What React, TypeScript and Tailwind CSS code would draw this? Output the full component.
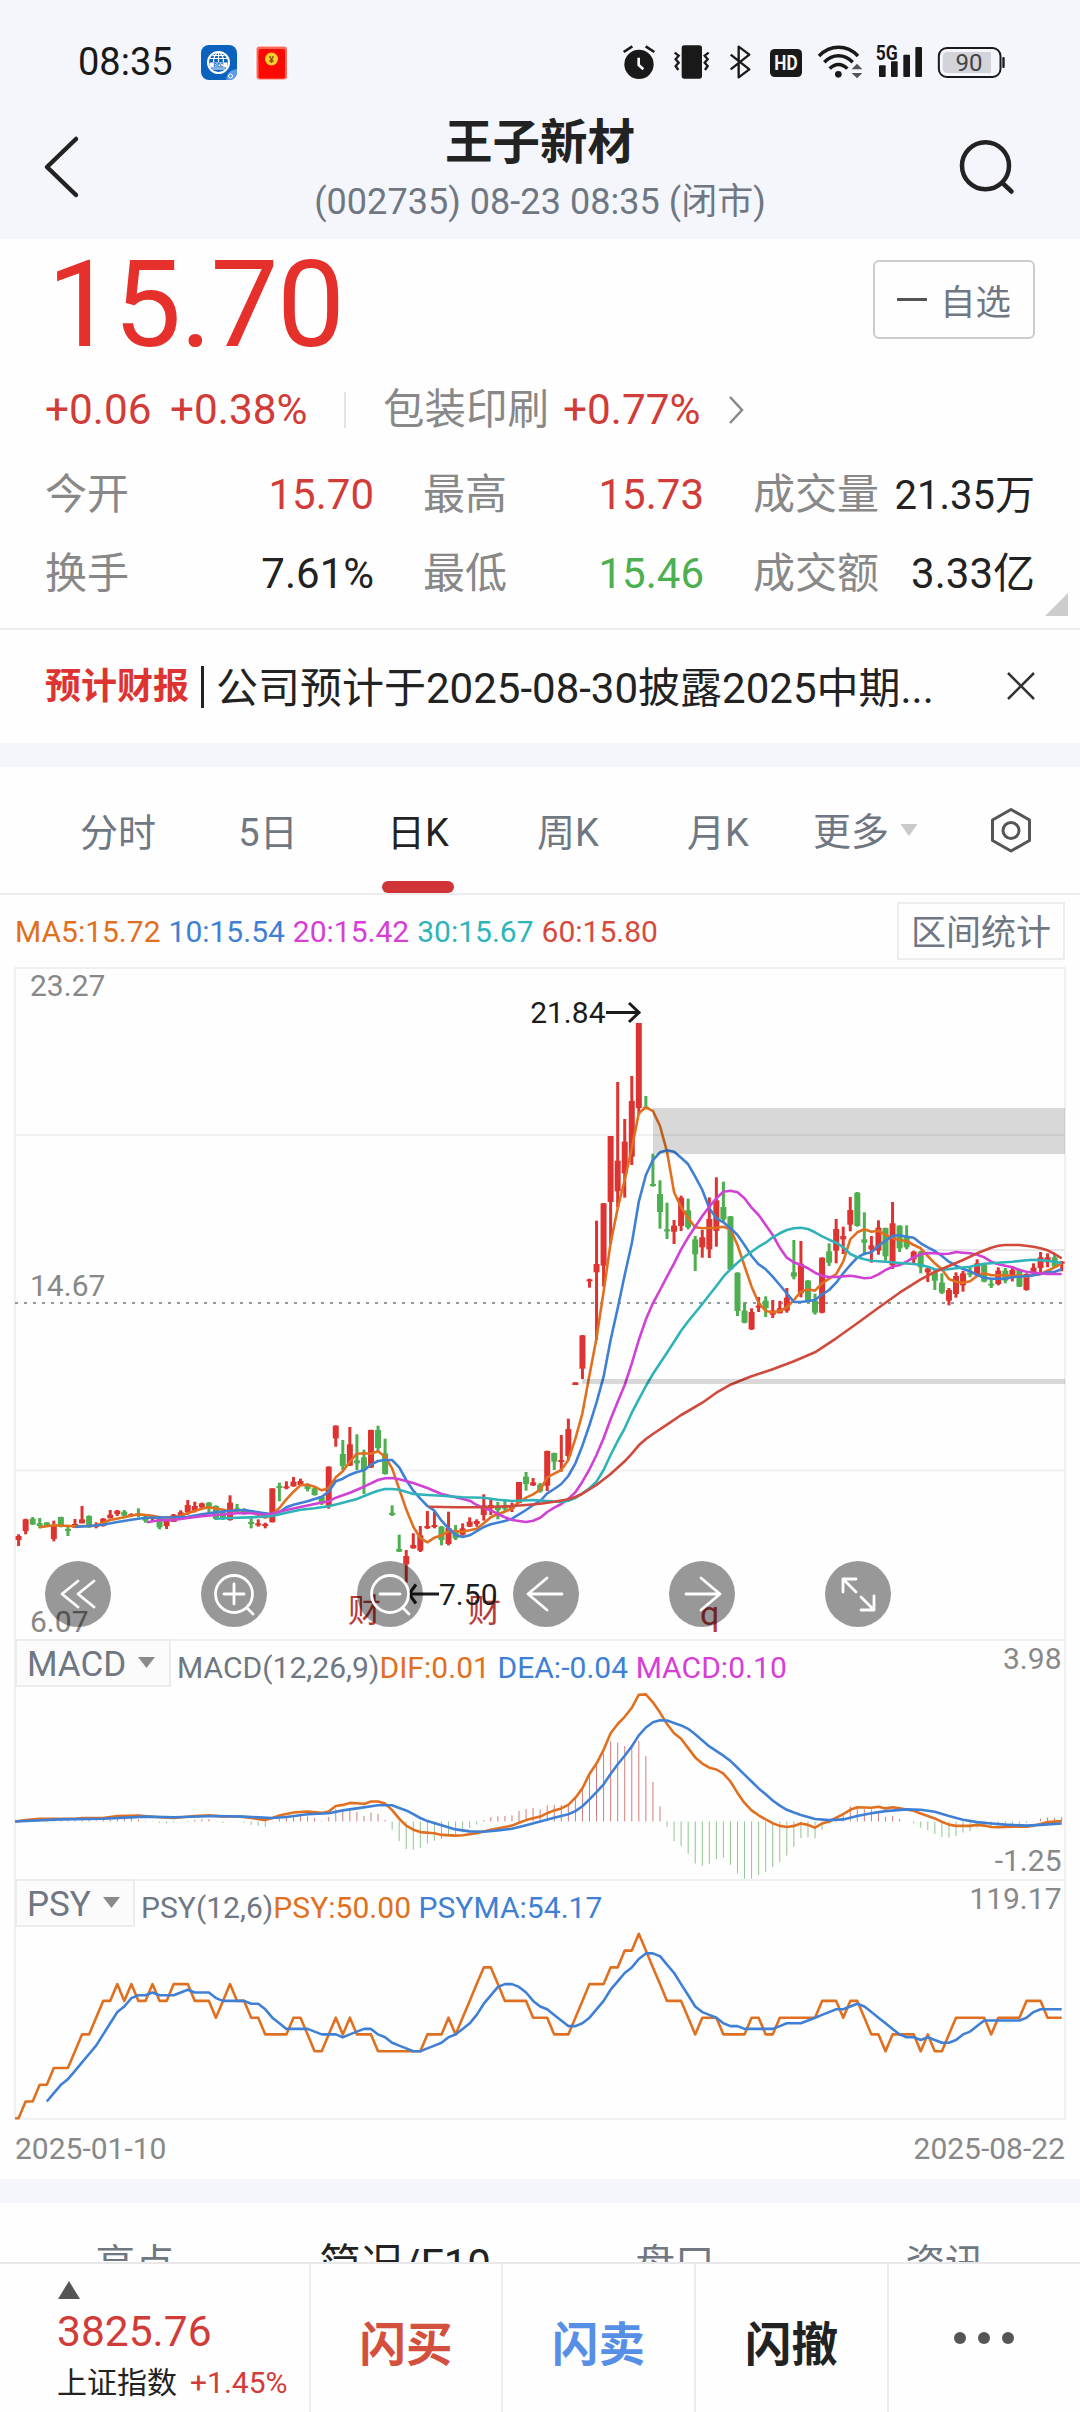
import * as React from "react";

import clsx from "clsx";

type Point = [number, number];
// high, body top, body bottom, low, 1 = up / 0 = down
type Candle = [number, number, number, number, 0 | 1];

const STEP = 7.048;
const X0 = 18.6;
const LEFT = 15;
const RIGHT = 1065;

const x = (i: number) => Math.min(RIGHT, Math.max(LEFT, X0 + i * STEP));

// series are stored in scaled units, these bring them to the pixels of each panel
const priceY = (v: number) => v / 3 + 13;
const macdY = (v: number) => v / 2.904 - 9;
const psyY = (level: number) => (1418 - level * 48.7) / 2.904 - 249;

const EARLY: Candle[] = [
  [763, 768, 780, 798, 1], [716, 718, 753, 763, 1], [711, 716, 733, 735, 0], [714, 730, 738, 745, 0], [727, 727, 738, 738, 0],
  [722, 735, 777, 784, 1], [710, 711, 740, 742, 0], [738, 747, 752, 768, 0], [717, 732, 743, 743, 1], [678, 718, 730, 730, 1],
  [706, 708, 742, 743, 0], [727, 735, 740, 745, 1], [714, 716, 737, 740, 1], [690, 704, 715, 715, 1], [690, 692, 702, 708, 1],
  [690, 695, 707, 710, 0], [700, 702, 707, 710, 1], [685, 700, 708, 712, 0], [706, 710, 722, 728, 0], [706, 708, 716, 726, 1],
  [708, 710, 742, 748, 0], [720, 723, 738, 747, 1], [702, 704, 726, 726, 1], [691, 697, 705, 720, 1], [660, 675, 697, 704, 1],
  [665, 678, 692, 697, 1], [668, 670, 682, 684, 1], [666, 668, 683, 697, 0], [676, 678, 717, 720, 0], [690, 697, 717, 720, 0],
  [646, 668, 720, 722, 1], [672, 685, 690, 697, 0], [685, 687, 698, 704, 0], [712, 726, 731, 745, 0], [718, 730, 735, 740, 1],
  [728, 732, 736, 745, 1], [625, 625, 727, 727, 1], [608, 618, 624, 664, 0], [604, 619, 624, 628, 1], [591, 605, 619, 620, 1],
  [596, 603, 615, 616, 1], [610, 612, 627, 634, 0], [624, 625, 645, 647, 0], [648, 650, 670, 675, 0], [559, 560, 677, 686, 1],
  [436, 437, 475, 500, 1], [480, 522, 558, 570, 0], [441, 493, 557, 558, 1], [463, 541, 550, 570, 0], [509, 532, 570, 642, 0],
  [449, 450, 562, 564, 1], [437, 450, 504, 516, 0], [476, 520, 582, 584, 0], [676, 698, 705, 708, 0], [764, 807, 815, 816, 0],
  [810, 828, 853, 908, 1], [760, 795, 805, 806, 1], [738, 766, 812, 816, 1], [693, 738, 745, 747, 1], [695, 735, 740, 745, 1],
  [738, 740, 780, 796, 0], [695, 744, 792, 796, 1], [735, 750, 775, 780, 0], [730, 745, 764, 767, 1], [712, 725, 740, 741, 1],
  [718, 723, 732, 740, 1], [643, 676, 705, 722, 1], [654, 675, 685, 705, 1], [666, 682, 690, 718, 0], [658, 678, 686, 694, 0],
  [668, 677, 686, 696, 1], [606, 606, 669, 670, 1], [576, 590, 612, 632, 0], [594, 607, 616, 618, 1], [609, 614, 634, 638, 0],
  [512, 513, 617, 633, 1], [518, 519, 545, 570, 0], [465, 540, 545, 575, 1], [416, 447, 528, 540, 1],
];

const LATE: Candle[] = [
  [1207, 1207, 1215, 1215, 1], [1065, 1066, 1166, 1197, 1], [896, 898, 904, 923, 1], [722, 852, 877, 1080, 1], [669, 670, 857, 920, 1],
  [468, 468, 666, 792, 1], [306, 542, 634, 682, 1], [417, 485, 580, 653, 1], [288, 363, 530, 555, 1], [129, 129, 384, 404, 1],
  [348, 380, 385, 388, 0], [521, 612, 618, 620, 0], [601, 642, 696, 746, 0], [668, 748, 754, 777, 0], [720, 737, 755, 792, 1],
  [647, 653, 738, 753, 1], [656, 691, 742, 748, 0], [768, 778, 823, 873, 0], [750, 772, 802, 833, 1], [652, 717, 808, 834, 1],
  [592, 661, 753, 800, 1], [605, 681, 718, 725, 0], [708, 709, 868, 870, 0], [877, 878, 993, 1008, 0], [967, 992, 1028, 1030, 0],
  [985, 996, 1048, 1050, 1], [951, 977, 982, 996, 1], [949, 962, 984, 1011, 0], [960, 992, 1004, 1014, 1], [963, 985, 1000, 1000, 1],
  [924, 953, 992, 998, 1], [780, 877, 890, 898, 0], [783, 851, 940, 952, 1], [900, 902, 960, 968, 0], [941, 962, 998, 1004, 0],
  [832, 833, 998, 1000, 1], [790, 814, 848, 858, 0], [717, 747, 812, 850, 1], [740, 768, 778, 822, 1], [651, 690, 734, 754, 1],
  [636, 638, 738, 740, 0], [697, 778, 788, 826, 0], [768, 796, 808, 848, 1], [721, 743, 812, 824, 1], [743, 744, 829, 842, 0],
  [666, 730, 856, 867, 1], [736, 737, 805, 816, 0], [736, 768, 802, 808, 0], [812, 815, 838, 854, 1], [812, 815, 862, 880, 0],
  [863, 866, 877, 906, 1], [868, 876, 902, 930, 0], [880, 908, 938, 942, 0], [924, 930, 962, 976, 1], [877, 888, 942, 953, 1],
  [873, 880, 916, 935, 1], [862, 878, 882, 892, 0], [838, 850, 886, 890, 1], [852, 854, 905, 907, 0], [898, 911, 917, 924, 0],
  [862, 872, 912, 916, 1], [864, 872, 902, 910, 0], [858, 870, 894, 904, 1], [866, 868, 920, 921, 0], [880, 882, 930, 932, 1],
  [850, 863, 880, 884, 1], [816, 832, 864, 883, 1], [820, 832, 847, 862, 1], [820, 832, 860, 864, 0], [843, 845, 850, 874, 1],
];

const CANDLES: Candle[] = [
  ...EARLY.map(([h, t, b, l, up]): Candle => [h + 900, t + 900, b + 900, l + 900, up]),
  ...LATE,
];

const MA5: Point[] = [
  [3, 1642], [5, 1636], [8, 1639], [10, 1638], [11, 1637], [12, 1628], [13, 1620], [15, 1612], [17, 1603], [19, 1607], [20, 1612], [22, 1613], [24, 1600],
  [26, 1586], [27, 1582], [29, 1589], [30, 1594], [32, 1590], [34, 1604], [35, 1613], [36, 1603], [37, 1584], [38, 1558], [39, 1535], [40, 1516],
  [41, 1514], [42, 1520], [43, 1531], [44, 1525], [45, 1492], [46, 1474], [47, 1445], [48, 1421], [49, 1420], [50, 1421], [51, 1414], [52, 1430],
  [53, 1465], [54, 1527], [55, 1588], [56, 1640], [57, 1674], [58, 1687], [59, 1673], [60, 1666], [61, 1654], [62, 1653], [63, 1655], [64, 1651],
  [65, 1646], [66, 1630], [67, 1612], [68, 1602], [69, 1595], [70, 1585], [71, 1566], [72, 1553], [73, 1543], [74, 1529], [75, 1492], [76, 1481],
  [77, 1470], [78, 1440], [79, 1376], [80, 1300], [81, 1185], [82, 1075], [83, 935], [84, 790], [85, 685], [86, 600], [87, 505], [88, 400],
  [89, 382], [90, 393], [91, 438], [92, 515], [93, 637], [94, 682], [95, 715], [96, 742], [97, 745], [99, 743], [100, 740], [101, 748],
  [102, 795], [103, 858], [104, 920], [105, 968], [106, 993], [107, 997], [108, 993], [109, 982], [110, 960], [111, 935], [112, 928], [113, 932],
  [114, 910], [115, 896], [116, 882], [117, 845], [118, 778], [119, 757], [120, 748], [121, 755], [122, 752], [123, 765], [124, 775], [125, 780],
  [126, 783], [127, 795], [128, 805], [129, 828], [130, 850], [131, 868], [132, 897], [133, 905], [134, 908], [135, 904], [136, 888], [137, 880],
  [138, 886], [140, 886], [141, 888], [142, 886], [143, 890], [144, 885], [145, 882], [146, 872], [147, 862], [148, 850],
];

const MA10: Point[] = [
  [8, 1641], [10, 1638], [12, 1634], [14, 1626], [16, 1619], [18, 1613], [22, 1612], [24, 1610], [26, 1603], [28, 1597], [30, 1592], [32, 1590],
  [34, 1597], [36, 1603], [37, 1596], [38, 1582], [39, 1574], [41, 1564], [43, 1550], [44, 1535], [45, 1504], [46, 1496], [47, 1484], [48, 1476],
  [49, 1471], [50, 1454], [51, 1443], [52, 1440], [53, 1440], [54, 1462], [55, 1500], [56, 1532], [57, 1556], [58, 1578], [59, 1592], [60, 1622],
  [61, 1645], [62, 1665], [63, 1671], [64, 1666], [66, 1641], [67, 1633], [69, 1623], [70, 1616], [71, 1603], [72, 1590], [73, 1575], [74, 1563],
  [75, 1540], [76, 1527], [77, 1512], [78, 1488], [79, 1450], [80, 1397], [81, 1335], [82, 1268], [83, 1190], [84, 1080], [85, 985], [86, 885],
  [87, 790], [88, 665], [89, 585], [90, 540], [91, 517], [92, 511], [93, 515], [94, 533], [95, 553], [96, 590], [97, 630], [98, 685], [99, 715],
  [100, 727], [101, 745], [102, 765], [103, 795], [104, 828], [105, 853], [106, 868], [107, 890], [108, 915], [109, 940], [110, 966], [111, 966],
  [112, 963], [113, 960], [114, 943], [115, 930], [116, 908], [117, 880], [118, 855], [119, 833], [120, 821], [121, 817], [122, 797], [123, 782],
  [124, 768], [125, 766], [126, 770], [127, 773], [128, 790], [129, 802], [130, 813], [131, 828], [132, 845], [133, 857], [134, 867], [135, 874],
  [136, 884], [137, 893], [138, 896], [140, 896], [141, 892], [142, 890], [144, 886], [145, 882], [146, 877], [147, 875], [148, 868],
];

const MA20: Point[] = [
  [18.2, 1627], [20, 1621], [22, 1620], [24, 1614], [26, 1609], [28, 1605], [31, 1600], [33, 1600], [35, 1604], [36, 1601], [38, 1590], [40, 1581],
  [42, 1572], [44, 1564], [45, 1553], [47, 1538], [49, 1520], [51, 1500], [52, 1495], [53, 1494], [54, 1498], [56, 1509], [58, 1524], [60, 1542],
  [62, 1552], [64, 1562], [65, 1575], [66, 1585], [67, 1591], [68, 1602], [69, 1612], [70, 1620], [71, 1623], [72, 1626], [73, 1622], [74, 1613],
  [75, 1596], [76, 1583], [77, 1572], [78, 1557], [79, 1537], [80, 1505], [81, 1468], [82, 1425], [83, 1375], [84, 1318], [85, 1265], [86, 1215],
  [87, 1150], [88, 1080], [89, 1018], [90, 970], [91, 930], [92, 890], [93, 850], [94, 808], [95, 772], [96, 740], [97, 708], [98, 680], [99, 655],
  [100, 635], [101, 632], [102, 637], [103, 655], [104, 683], [105, 705], [106, 735], [107, 765], [108, 803], [109, 833], [110, 847], [111, 855],
  [112, 865], [113, 878], [114, 887], [115, 891], [116, 891], [118, 887], [119, 890], [120, 895], [121, 893], [122, 883], [123, 870], [124, 860],
  [125, 855], [126, 845], [127, 832], [128, 823], [129, 819], [130, 820], [131, 822], [132, 821], [133, 816], [134, 818], [135, 820], [136, 824],
  [137, 832], [138, 845], [139, 853], [140, 857], [141, 862], [142, 870], [143, 875], [144, 878], [145, 880], [146, 882], [148, 882],
];

const MA30: Point[] = [
  [28, 1616], [30, 1614], [34, 1611], [36, 1608], [38, 1598], [40, 1589], [42, 1585], [44, 1579], [46, 1568], [48, 1557], [50, 1540], [51, 1532],
  [52, 1527], [53, 1527], [54, 1529], [56, 1542], [58, 1545], [60, 1547], [63, 1552], [66, 1553], [68, 1559], [70, 1563], [73, 1560], [75, 1563],
  [77, 1566], [78, 1562], [79, 1554], [80, 1540], [81, 1525], [82, 1505], [83, 1470], [84, 1425], [85, 1383], [86, 1345], [87, 1298], [88, 1258],
  [89, 1218], [90, 1182], [91, 1150], [92, 1118], [93, 1085], [94, 1052], [95, 1024], [96, 998], [97, 972], [98, 945], [99, 918], [100, 890],
  [101, 868], [102, 848], [103, 830], [104, 815], [105, 800], [106, 788], [107, 772], [108, 760], [109, 750], [110, 745], [111, 743], [112, 747],
  [113, 757], [114, 769], [115, 779], [116, 788], [117, 802], [118, 822], [119, 832], [120, 838], [121, 842], [123, 845], [125, 849], [127, 852],
  [128, 855], [129, 860], [130, 868], [131, 870], [133, 865], [135, 860], [137, 851], [139, 848], [141, 845], [143, 841], [144, 839], [146, 842],
  [147, 845], [148, 849],
];

const MA60: Point[] = [
  [58.2, 1580], [62, 1582], [66, 1582], [70, 1578], [72, 1575], [74, 1571], [76, 1565], [78, 1558], [79, 1551], [80, 1541], [82, 1515], [84, 1482],
  [86, 1444], [87, 1421], [88, 1396], [89, 1377], [90, 1362], [92, 1334], [94, 1305], [95, 1293], [97, 1268], [99, 1238], [101, 1214], [103, 1197],
  [104, 1189], [107, 1168], [110, 1144], [113, 1117], [116, 1075], [119, 1030], [122, 983], [125, 938], [128, 898], [130, 876], [132, 858],
  [134, 840], [136, 820], [138, 803], [139, 797], [140, 795], [142, 795], [144, 800], [145, 805], [146, 811], [147, 822], [148, 835],
];

const DIF: Point[] = [
  [-0.5, 556], [1, 552], [3, 548], [8, 548], [9, 546], [12, 546], [14, 540], [17, 539], [20, 544], [22, 546], [25, 540], [27, 538], [29, 542],
  [31, 541], [33, 546], [35, 552], [36, 546], [37, 539], [39, 530], [41, 527], [43, 531], [44, 527], [45, 511], [46, 508], [47, 502], [48, 503],
  [49, 505], [50, 498], [51, 498], [52, 504], [53, 523], [54, 548], [55, 568], [56, 580], [57, 587], [59, 590], [60, 595], [62, 597], [63, 596],
  [65, 590], [67, 580], [70, 568], [71, 560], [72, 552], [74, 542], [75, 532], [76, 524], [77, 518], [78, 508], [79, 487], [80, 460], [81, 418],
  [82, 388], [83, 348], [84, 300], [85, 273], [86, 252], [87, 226], [88, 188], [89, 187], [90, 210], [91, 240], [92, 273], [93, 300], [94, 316],
  [95, 343], [96, 370], [97, 388], [98, 400], [99, 405], [100, 417], [101, 440], [102, 473], [103, 502], [104, 524], [105, 538], [106, 550],
  [107, 561], [108, 569], [109, 572], [110, 569], [111, 562], [112, 566], [113, 574], [114, 562], [115, 556], [116, 545], [117, 535], [118, 522],
  [119, 515], [121, 516], [122, 513], [123, 518], [124, 515], [125, 518], [127, 525], [128, 533], [130, 547], [131, 557], [132, 565], [133, 569],
  [135, 569], [136, 566], [137, 568], [138, 572], [139, 573], [141, 571], [143, 571], [144, 568], [145, 563], [146, 558], [148, 555],
];

const DEA: Point[] = [
  [-0.5, 556], [6, 550], [12, 548], [18, 542], [22, 544], [28, 540], [32, 542], [36, 546], [38, 543], [41, 535], [44, 532], [46, 524], [48, 518],
  [51, 509], [53, 509], [54, 517], [55, 524], [56, 535], [57, 546], [58, 555], [60, 567], [62, 579], [64, 585], [66, 586], [68, 582], [70, 577],
  [72, 567], [74, 556], [76, 545], [78, 535], [79, 526], [80, 512], [81, 492], [82, 471], [83, 448], [84, 418], [85, 390], [86, 365], [87, 338],
  [88, 306], [89, 283], [90, 268], [91, 262], [92, 263], [94, 277], [95, 287], [96, 303], [98, 338], [100, 365], [101, 380], [102, 400],
  [103, 420], [104, 440], [105, 460], [106, 477], [107, 495], [108, 510], [109, 522], [110, 530], [111, 537], [112, 543], [113, 549], [115, 552],
  [117, 550], [119, 540], [121, 532], [123, 526], [126, 521], [128, 522], [130, 528], [132, 540], [134, 551], [136, 558], [138, 562], [140, 565],
  [143, 568], [145, 566], [148, 562],
];

const MACD_ZERO = 556;
const MACD_BARS = [
  556, 554, 552, 550, 549, 549, 551, 552, 552, 550, 552, 553, 551, 550, 547, 546, 546, 550, 554, 557, 560, 562, 560, 557, 554, 551, 549, 549, 555, 560,
  555, 557, 560, 566, 569, 572, 555, 548, 546, 541, 541, 541, 546, 554, 543, 520, 522, 521, 528, 540, 530, 534, 551, 580, 613, 636, 638, 633, 620, 612,
  607, 597, 594, 588, 575, 565, 552, 543, 541, 540, 538, 525, 520, 517, 521, 509, 508, 508, 508, 485, 462, 412, 390, 358, 323, 327, 337, 338, 322, 366,
  441, 512, 572, 613, 627, 650, 678, 685, 679, 665, 661, 682, 707, 722, 722, 711, 702, 688, 674, 655, 630, 604, 602, 605, 580, 563, 545, 538, 512, 515,
  520, 521, 525, 543, 540, 549, 556, 562, 574, 581, 592, 601, 603, 598, 588, 584, 574, 570, 575, 573, 568, 566, 562, 560, 558, 548, 544, 545, 543,
];

// one hex digit per day (ten days in a group): rising days out of twelve
const PSY_LEVELS = [
  "0112233345",
  "5677878778",
  "7788877767",
  "8776655556",
  "6544565655",
  "5444444455",
  "5656789987",
  "7776665556",
  "788899aaba",
  "9877765666",
  "5555665566",
  "6666777677",
  "6554555545",
  "4456666656",
  "666777666",
]
  .join("")
  .split("")
  .map((c) => parseInt(c, 16));

const psyAverage = (i: number) => {
  let sum = 0;
  for (let k = i - 5; k <= i; k++) sum += k < 0 ? 0 : PSY_LEVELS[k];
  return sum / 6;
};

const toPoints = (points: Point[], y: (v: number) => number) => points.map(([i, v]) => `${x(i).toFixed(1)},${y(v).toFixed(1)}`).join(" ");

function Line({ points, y, color }: { points: Point[]; y: (v: number) => number; color: string }) {
  return <polyline points={toPoints(points, y)} fill="none" stroke={color} strokeWidth={2.6} strokeLinejoin="round" />;
}

const RED = "#dd3431";
const GREEN = "#4fae4f";
const ORANGE = "#e07020";
const BLUE = "#3f80d4";

function StatusBar() {
  return (
    <div className="flex h-[112px] items-start pt-[44px] text-[#191919]">
      <span className="ml-[78px] w-[122px] text-[38px] leading-[37px]">08:35</span>
      <svg className="mt-px h-[36px] w-[37px]" viewBox="0 0 37 36">
        <rect x="1" width="36" height="35" rx="8" fill="#0b62bd" />
        <circle cx="18.500" cy="17.500" r="10.500" fill="none" stroke="#fff" strokeWidth="2" />
        <path d="M10 13.500h17M12.500 10.500h12M18.500 7v10M13.500 17c0-5 1.500-8 5-10 3.500 2 5 5 5 10M12 24h13" fill="none" stroke="#fff" strokeWidth="1.200" />
        <rect x="9.500" y="17.500" width="18" height="5" fill="#fff" />
        <text x="18.500" y="22.200" fontSize="5.500" fontWeight="700" textAnchor="middle" fill="#0b62bd">REC</text>
        <path d="M37 24v3a8 8 0 0 1-8 8h-3c1-7 4-10 11-11z" fill="#5b9ae8" />
        <circle cx="30.500" cy="31" r="2" fill="none" stroke="#fff" strokeWidth="1" />
      </svg>
      <svg className="mt-px ml-[17px] h-[36px] w-[35px]" viewBox="0 0 35 36">
        <rect x="0.500" y="0.500" width="34" height="34" rx="7" fill="#fff" />
        <rect x="2.500" y="1.500" width="30.500" height="33" rx="3" fill="#ff6a5c" />
        <rect x="4.500" y="4" width="26.500" height="29.500" rx="2" fill="#fb0a05" />
        <path d="M4 12c8 3 19 3 27 0" fill="none" stroke="#c9180c" strokeWidth="1" />
        <circle cx="17.500" cy="14" r="6.500" fill="#f8d02a" />
        <text x="17.500" y="17.500" fontSize="9" fontWeight="700" textAnchor="middle" fill="#8a4a10">¥</text>
      </svg>

      <div className="ml-[333px] flex items-start">
        <svg className="h-[36px] w-[34px]" viewBox="36 30 102 108">
          <circle cx="87" cy="91" r="44" fill="#191919" />
          <path d="M41 54l26-17M133 54l-26-17" stroke="#191919" strokeWidth="8" />
          <path d="M86 71v22l14 13" fill="none" stroke="#f4f6fb" strokeWidth="8" />
        </svg>
        <svg className="ml-[17px] h-[36px] w-[37px]" viewBox="189 30 111 108">
          <rect x="215" y="34" width="61" height="100" rx="8" fill="#191919" />
          <path d="M194 56l12 9-9 11 9 10-9 10 8 12M296 56l-12 9 9 11-9 10 9 10-8 12" fill="none" stroke="#191919" strokeWidth="7" />
        </svg>
        <svg className="ml-[19px] h-[36px] w-[23px]" viewBox="357 30 69 108">
          <path d="M362 62l56 44-32 24V38l32 24-56 44" fill="none" stroke="#191919" strokeWidth="7" strokeLinejoin="round" />
        </svg>
        <svg className="ml-[17px] h-[36px] w-[34px]" viewBox="477 30 102 108">
          <rect x="480" y="45" width="96" height="84" rx="14" fill="#191919" />
          <text x="528" y="109" fontSize="62" fontWeight="700" textAnchor="middle" textLength="70" lengthAdjust="spacingAndGlyphs" fill="#f4f6fb">HD</text>
        </svg>
        <svg className="ml-[14px] h-[36px] w-[47px]" viewBox="621 30 141 108">
          <path d="M627 66c34-35 84-35 117 0M643 85c25-26 60-26 85 0M659 104c16-17 37-17 53 0" fill="none" stroke="#191919" strokeWidth="10.500" />
          <circle cx="685" cy="121" r="10" fill="#191919" />
          <path d="M725 106h32l-16-17zM725 117h32l-16 16z" fill="#555" />
        </svg>
        <svg className="ml-[11px] h-[36px] w-[48px] overflow-visible" viewBox="795 30 144 108">
          <text x="797" y="78" fontSize="60" fontWeight="700" textLength="66" lengthAdjust="spacingAndGlyphs" fill="#191919">5G</text>
          <rect x="807" y="94" width="20" height="35" rx="3" fill="#191919" />
          <rect x="843" y="82" width="20" height="47" rx="3" fill="#191919" />
          <rect x="880" y="62" width="20" height="67" rx="3" fill="#191919" />
          <rect x="916" y="39" width="20" height="90" rx="3" fill="#191919" />
        </svg>
        <svg className="ml-[14px] h-[36px] w-[68px]" viewBox="981 30 204 108">
          <rect x="986.500" y="42" width="185" height="87" rx="24" fill="none" stroke="#191919" strokeWidth="6" />
          <path d="M1012 54h131v63h-131a14 14 0 0 1-14-14V68a14 14 0 0 1 14-14z" fill="#d2d4da" />
          <rect x="1177" y="69" width="7" height="33" rx="3" fill="#191919" />
          <text x="1077" y="111" fontSize="72" textAnchor="middle" fill="#444">90</text>
        </svg>
      </div>
    </div>
  );
}

function TitleBar() {
  return (
    <div className="flex h-[127px] items-start justify-between">
      <svg className="mt-[22px] mr-[40px] ml-[42px] h-[66px] w-[40px]" viewBox="0 0 40 66" fill="none" stroke="#222" strokeWidth="4.500" strokeLinecap="round" strokeLinejoin="round">
        <path d="M34 5L5 33l29 28" />
      </svg>
      <div className="flex flex-col items-center">
        <h1 className="mt-[3px] text-[47.500px] leading-[56px] font-bold text-[#222]">王子新材</h1>
        <p className="mt-[7px] text-[36px] leading-[48px] tracking-[0.050px] text-[#6f7782]">(002735) 08-23 08:35 (闭市)</p>
      </div>
      <svg className="mt-[26px] mr-[62px] h-[58px] w-[60px]" viewBox="0 0 60 58" fill="none" stroke="#222" strokeWidth="4.500" strokeLinecap="round">
        <circle cx="27.500" cy="27.700" r="23.500" />
        <path d="M45 45.500l8.500 8" />
      </svg>
    </div>
  );
}

const STATS = [
  { label: "今开", value: "15.70", color: "text-[#d13b38]" },
  { label: "最高", value: "15.73", color: "text-[#d13b38]" },
  { label: "成交量", value: "21.35万", color: "text-[40px] text-[#222]" },
  { label: "换手", value: "7.61%", color: "text-[#222]" },
  { label: "最低", value: "15.46", color: "text-[#4caf50]" },
  { label: "成交额", value: "3.33亿", color: "text-[42px] text-[#222]" },
];

function Quote() {
  return (
    <section className="relative h-[391px] border-b-2 border-[#ececec]">
      <div className="flex h-[128px] items-start justify-between pr-[45px] pl-[47px]">
        <div className="pt-[2px] text-[121px] leading-[128px] tracking-[-1.500px] text-[#e5302c]">15.70</div>
        <button className="mt-[21px] flex h-[79px] w-[162px] items-center justify-center gap-[13px] rounded-md border-2 border-[#ccc] text-[35.500px] text-[#6f7782]">
          <span className="h-[3px] w-[30px] bg-[#555]" />
          <span className="pt-[8px]">自选</span>
        </button>
      </div>
      <div className="flex h-[86px] items-center pl-[45px] text-[42.300px] text-[#d13b38]">
        <span className="w-[125px]">+0.06</span>
        <span className="w-[174px]">+0.38%</span>
        <span className="h-[36px] w-[2px] bg-[#e4e4e4]" />
        <span className="ml-[37px] text-[41.500px] text-[#888]">包装印刷</span>
        <span className="ml-[14px]">+0.77%</span>
        <svg className="ml-[27px] h-[30px] w-[18px]" viewBox="0 0 18 30" fill="none" stroke="#888" strokeWidth="2.500">
          <path d="M3 2l12 13L3 28" />
        </svg>
      </div>
      <div className="grid grid-cols-[329px_281px_282px] gap-x-[49px] pt-[3px] pl-[45px] text-[42px] leading-[78px]">
        {STATS.map((s) => (
          <div key={s.label} className="flex items-baseline justify-between whitespace-nowrap">
            <span className="text-[#888]">{s.label}</span>
            <span className={s.color}>{s.value}</span>
          </div>
        ))}
      </div>
      <svg className="absolute right-[12px] bottom-[12px] h-[23px] w-[23px]" viewBox="0 0 23 23">
        <path d="M23 0v23H0z" fill="#ccc" />
      </svg>
    </section>
  );
}

function Notice() {
  return (
    <section className="flex h-[113px] items-center pl-[45px]">
      <span className="text-[36px] font-bold text-[#dd3431]">预计财报</span>
      <span className="ml-[12px] h-[42px] w-[3px] shrink-0 bg-[#222]" />
      <span className="ml-[12px] w-[790px] shrink-0 pt-[3px] text-[42px] whitespace-nowrap text-[#222]">公司预计于2025-08-30披露2025中期...</span>
      <svg className="mb-[2px] h-[28px] w-[30px]" viewBox="0 0 30 28" stroke="#333" strokeWidth="2.500">
        <path d="M2 1l26 26M28 1L2 27" />
      </svg>
    </section>
  );
}

const PERIODS = ["分时", "5日", "日K", "周K", "月K"];

function PeriodTabs() {
  const [active, setActive] = React.useState("日K");

  return (
    <nav className="flex h-[128px] items-center border-b-2 border-[#ececec] pl-[43px] text-[38px] text-[#6f7782]">
      {PERIODS.map((p) => (
        <button
          key={p}
          onClick={() => setActive(p)}
          className={clsx("flex h-full w-[150px] flex-col items-center justify-end", active === p && "text-[#222]")}
        >
          <span className="leading-[56px]">{p}</span>
          <span className={clsx("mt-[20px] h-[12px] w-[72px] rounded-md", active === p ? "bg-[#d03436]" : "bg-transparent")} />
        </button>
      ))}
      <button className="ml-[20px] flex items-center">
        <span className="pt-[4px]">更多</span>
        <svg className="ml-[11px] h-[12px] w-[18px]" viewBox="0 0 18 12">
          <path d="M0.500 0h17L9 12z" fill="#c9c9c9" />
        </svg>
      </button>
      <svg className="ml-[71px] h-[48px] w-[44px]" viewBox="0 0 44 48" fill="none" stroke="#555" strokeWidth="3">
        <path d="M22 3.500l18.500 10.500v20.500L22 45 3.500 34.500V14z" strokeLinejoin="round" />
        <circle cx="22" cy="24.500" r="8" />
      </svg>
    </nav>
  );
}

function MaLegend() {
  return (
    <div className="flex h-[72px] items-center justify-between pr-[15px] pl-[15px] text-[30px]">
      <div className="flex gap-[8px]">
        <span className="text-[#e07020]">MA5:15.72</span>
        <span className="text-[#3f80d4]">10:15.54</span>
        <span className="text-[#d63fd6]">20:15.42</span>
        <span className="text-[#2fb5b9]">30:15.67</span>
        <span className="text-[#d64a3d]">60:15.80</span>
      </div>
      <button className="h-[58px] w-[168px] border-2 border-[#ededed] pt-[6px] text-[35px] leading-[48px] text-[#6f7782]">区间统计</button>
    </div>
  );
}

function RoundButton({ children }: { children: React.ReactNode }) {
  return (
    <button className="h-[66px] w-[66px] rounded-full bg-black/40">
      <svg className="h-[66px] w-[66px]" viewBox="-33 -33 66 66" fill="none" stroke="#fff" strokeWidth="2.800" strokeLinecap="round" strokeLinejoin="round">
        {children}
      </svg>
    </button>
  );
}

function PriceChart() {
  return (
    <div className="relative h-[672px]">
      <svg className="block h-[672px] w-[1080px]" viewBox="0 0 1080 672" fontSize="30">
        <path d="M15 1h1050v671M15 0v672M15 168h1050M15 503.500h1050" fill="none" stroke="#f0f0f1" strokeWidth="2" />
        <rect x="920" y="282" width="145" height="2" fill="#e6e6e6" />
        <path d="M15 336h1050" stroke="#999" strokeWidth="2" strokeDasharray="3 6" />
        <g fill="#888">
          <text x="30" y="29">23.27</text>
          <text x="30" y="329">14.67</text>
          <text x="30" y="665">6.07</text>
        </g>
        {CANDLES.map(([h, t, b, l, up], i) => (
          <g key={i} fill={up ? RED : GREEN}>
            <rect x={x(i) - 1.5} y={priceY(h)} width={3} height={Math.max(1, (l - h) / 3)} />
            <rect x={x(i) - 3} y={priceY(t)} width={6} height={Math.max(2, (b - t) / 3)} />
          </g>
        ))}
        <Line points={MA5} y={priceY} color={ORANGE} />
        <Line points={MA10} y={priceY} color={BLUE} />
        <Line points={MA20} y={priceY} color="#d041d4" />
        <Line points={MA30} y={priceY} color="#2fb3b8" />
        <Line points={MA60} y={priceY} color="#cf4a3d" />
        <rect x="653" y="141" width="412" height="46" fill="#000" opacity="0.15" />
        <rect x="582" y="412" width="483" height="5" fill="#000" opacity="0.15" />
        <g fill="#b8393a" fontSize="33">
          <text x="348" y="655">财</text>
          <text x="468" y="655">财</text>
          <text x="700" y="658" fontSize="34">q</text>
        </g>
        <g fill="#1c1c1c">
          <text x="605.500" y="56" textAnchor="end">21.84</text>
          <text x="439" y="638">7.50</text>
        </g>
        <g fill="none" stroke="#1c1c1c" strokeWidth="3">
          <path d="M606 45.500h32M629 36l10 9.500-10 9.500" />
          <path d="M439 627h-29M416 617.500l-7 9.500 7 9.500" />
        </g>
      </svg>
      <div className="absolute top-[594px] left-[45px] flex gap-[90px]">
        <RoundButton>
          <path d="M0-13L-16 0 0 13M16-13L0 0 16 13" />
        </RoundButton>
        <RoundButton>
          <circle r="18.500" />
          <path d="M-10 0h20M0-10v20M13 14l6 6" />
        </RoundButton>
        <RoundButton>
          <circle r="18.500" />
          <path d="M-10 0h20M13 14l6 6" />
        </RoundButton>
        <RoundButton>
          <path d="M16 0h-34M1-16L-18 0 1 16" />
        </RoundButton>
        <RoundButton>
          <path d="M-16 0h34M-1-16L18 0-1 16" />
        </RoundButton>
        <RoundButton>
          <path d="M-2-2L-15-15M-15-2v-13h13M3 3l13 13M16 2v14H3" />
        </RoundButton>
      </div>
    </div>
  );
}

function IndicatorHeader({ name, width, children }: { name: string; width: string; children: React.ReactNode }) {
  return (
    <div className="absolute top-0 left-[15px] flex items-start text-[30px] whitespace-pre">
      <button className={clsx("flex h-[48px] items-center border-2 border-[#ececee] bg-[#fbfbfc] pl-[10px] text-[35px] text-[#6f7782]", width)}>
        <span className="pt-[5px]">{name}</span>
        <svg className="mb-[2px] ml-[12px] h-[11px] w-[17px]" viewBox="0 0 17 11">
          <path d="M0 0h17L8.500 11z" fill="#8a8a8a" />
        </svg>
      </button>
      <div className="ml-[6px] leading-[57px] tracking-[0.040px]">{children}</div>
    </div>
  );
}

function MacdChart() {
  return (
    <div className="relative h-[240px]">
      <svg className="block h-[240px] w-[1080px]" viewBox="0 0 1080 240" fontSize="30">
        <path d="M15 1h1050v239M15 0v240" fill="none" stroke="#f0f0f1" strokeWidth="2" />
        {MACD_BARS.map((v, i) => (
          <rect key={i} x={x(i) - 0.5} y={macdY(Math.min(v, MACD_ZERO))} width={1} height={Math.abs(v - MACD_ZERO) / 2.904} fill={v < MACD_ZERO ? "#cf7d7b" : "#8fc48f"} />
        ))}
        <Line points={DIF} y={macdY} color={ORANGE} />
        <Line points={DEA} y={macdY} color={BLUE} />
        <g fill="#888" textAnchor="end">
          <text x="1061.500" y="30">3.98</text>
          <text x="1061.500" y="232">-1.25</text>
        </g>
      </svg>
      <IndicatorHeader name="MACD" width="w-[156px]">
        <span className="text-[#6f7782]">MACD(12,26,9)</span>
        <span className="text-[#e07020]">DIF:0.01 </span>
        <span className="text-[#3f80d4]">DEA:-0.04 </span>
        <span className="text-[#d63fd6]">MACD:0.10</span>
      </IndicatorHeader>
    </div>
  );
}

function PsyChart() {
  const levels: Point[] = [[-0.5, 0], ...PSY_LEVELS.map((v, i): Point => [i, v])];
  const average = PSY_LEVELS.map((_, i): Point => [i, psyAverage(i)]).slice(4);

  return (
    <div className="relative h-[241px]">
      <svg className="block h-[241px] w-[1080px]" viewBox="0 0 1080 241" fontSize="30">
        <path d="M15 1h1050v239H15V0" fill="none" stroke="#f0f0f1" strokeWidth="2" />
        <Line points={levels} y={psyY} color={ORANGE} />
        <Line points={average} y={psyY} color={BLUE} />
        <text x="1061.500" y="30" fill="#888" textAnchor="end">
          119.17
        </text>
      </svg>
      <IndicatorHeader name="PSY" width="w-[120px]">
        <span className="text-[#6f7782]">PSY(12,6)</span>
        <span className="text-[#e07020]">PSY:50.00 </span>
        <span className="text-[#3f80d4]">PSYMA:54.17</span>
      </IndicatorHeader>
    </div>
  );
}

const SECTIONS = ["亮点", "简况/F10", "盘口", "资讯"];

function SectionTabs() {
  return (
    <nav className="grid h-[59px] grid-cols-4 overflow-hidden pt-[33px] text-center text-[39.500px] leading-[58px] text-[#6f7782]">
      {SECTIONS.map((s) => (
        <span key={s} className={clsx(s === "简况/F10" && "text-[42px] text-[#222]")}>
          {s}
        </span>
      ))}
    </nav>
  );
}

function TradeBar() {
  return (
    <footer className="flex h-[150px] border-t-2 border-[#e8e8ea] text-[46.500px] font-bold">
      <div className="flex w-[311px] flex-col border-r-2 border-[#ececec] pt-[17px] pl-[57px] font-normal whitespace-nowrap">
        <svg className="h-[18px] w-[24px]" viewBox="0 0 24 18">
          <path d="M12 0l11 18H1z" fill="#555" />
        </svg>
        <span className="mt-[8px] text-[42.500px] leading-[50px] text-[#d13b38]">3825.76</span>
        <div className="mt-[6px] flex gap-[13px] text-[30px] leading-[40px]">
          <span className="text-[#222]">上证指数</span>
          <span className="text-[#d13b38]">+1.45%</span>
        </div>
      </div>
      <button className="w-[192px] border-r-2 border-[#ececec] pt-[15px] text-[#d4503e]">闪买</button>
      <button className="w-[193px] border-r-2 border-[#ececec] pt-[15px] text-[#588fe6]">闪卖</button>
      <button className="w-[193px] border-r-2 border-[#ececec] pt-[15px] text-[#222]">闪撤</button>
      <button className="flex flex-1 items-center justify-center gap-[12px] pr-[2px]">
        <span className="h-[12px] w-[12px] rounded-full bg-[#555]" />
        <span className="h-[12px] w-[12px] rounded-full bg-[#555]" />
        <span className="h-[12px] w-[12px] rounded-full bg-[#555]" />
      </button>
    </footer>
  );
}

export default function App() {
  return (
    <main className="h-[2412px] w-[1080px] overflow-hidden bg-[#fefefe] font-[Roboto,'Noto_Sans_CJK_SC',sans-serif]">
      <header className="bg-[#f4f6fb]">
        <StatusBar />
        <TitleBar />
      </header>
      <Quote />
      <Notice />
      <div className="h-[24px] bg-[#f4f6fb]" />
      <PeriodTabs />
      <MaLegend />
      <PriceChart />
      <MacdChart />
      <PsyChart />
      <div className="flex h-[59px] justify-between px-[15px] pt-[8px] text-[30px] leading-[42px] text-[#888]">
        <span>2025-01-10</span>
        <span>2025-08-22</span>
      </div>
      <div className="h-[24px] bg-[#f4f6fb]" />
      <SectionTabs />
      <TradeBar />
    </main>
  );
}
